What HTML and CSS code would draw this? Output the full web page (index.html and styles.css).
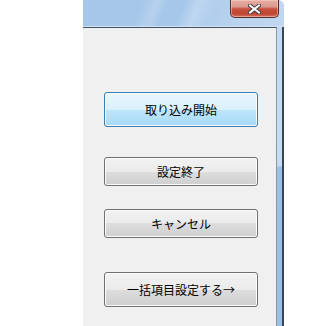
FILE: index.html
```html
<!DOCTYPE html>
<html lang="ja">
<head>
<meta charset="utf-8">
<link rel="stylesheet" href="styles.css">
</head>
<body>
<div class="screen">
  <div class="outside"></div>
  <div class="window">
    <div class="titlebar">
      <div class="close-btn">
        <svg width="13" height="10" viewBox="0 0 13 10" aria-hidden="true">
          <path d="M2 1.5 L11 8.5 M11 1.5 L2 8.5" stroke="#3b3b3b" stroke-width="4" stroke-linecap="square" fill="none"/>
          <path d="M2 1.5 L11 8.5 M11 1.5 L2 8.5" stroke="#ffffff" stroke-width="2" stroke-linecap="square" fill="none"/>
        </svg>
      </div>
    </div>
    <div class="frame-body">
      <div class="client">
        <div class="buttons">
          <button class="btn btn-hover btn-tall">取り込み開始</button>
          <button class="btn btn-short gap-a">設定終了</button>
          <button class="btn btn-short gap-b">キャンセル</button>
          <button class="btn btn-tall gap-c">一括項目設定する→</button>
        </div>
      </div>
      <div class="side-frame"></div>
    </div>
  </div>
</div>
</body>
</html>
```

FILE: styles.css
```css
html, body {
  margin: 0;
  padding: 0;
  background: #ffffff;
}

.screen {
  display: flex;
  width: 284px;
  height: 326px;
  overflow: hidden;
}

.outside {
  width: 83px;
  flex: none;
  background: #ffffff;
}

.window {
  flex: 1;
  display: flex;
  flex-direction: column;
}

.titlebar {
  height: 27px;
  flex: none;
  display: flex;
  justify-content: flex-end;
  align-items: flex-start;
  padding-right: 5px;
  border-top-right-radius: 6px;
  border-bottom: 1px solid #d3e4f5;
  background:
    linear-gradient(112deg,
      rgba(255,255,255,0) 0px,
      rgba(255,255,255,0) 55px,
      rgba(255,255,255,0.18) 70px,
      rgba(255,255,255,0) 80px,
      rgba(255,255,255,0) 95px,
      rgba(255,255,255,0.28) 108px,
      rgba(255,255,255,0.12) 125px,
      rgba(255,255,255,0.22) 150px,
      rgba(255,255,255,0.3) 201px),
    #a6c7ea;
  box-sizing: border-box;
}

.close-btn {
  width: 47px;
  height: 17px;
  display: flex;
  align-items: center;
  justify-content: center;
  border: 1px solid #5b2d2a;
  border-top: none;
  border-radius: 0 0 5px 5px;
  background: linear-gradient(#e6aca2 0%, #dc9a8e 40%, #c9503f 52%, #c04533 80%, #d0745f 100%);
  box-shadow: inset 0 0 0 1px rgba(255,220,210,0.45);
}

.close-btn svg {
  display: block;
  margin-top: 1px;
}

.frame-body {
  flex: 1;
  display: flex;
}

.client {
  flex: 1;
  background: #f0f0f0;
  border-top: 1px solid #3e5165;
  border-right: 1px solid #8a98a6;
}

.buttons {
  display: flex;
  flex-direction: column;
  align-items: flex-start;
  padding: 64px 0 0 21px;
}

.side-frame {
  width: 5px;
  flex: none;
  border-right: 2px solid #3a4654;
  background: linear-gradient(#c2d9f1 0px, #c6dcf2 139px, #9cc1e8 140px, #9ac0e8 100%);
}

.btn {
  width: 154px;
  margin: 0;
  padding: 0;
  box-sizing: border-box;
  font-family: "Noto Sans CJK JP", "Noto Sans", sans-serif;
  font-size: 12px;
  line-height: 1;
  color: #000000;
  border: 1px solid #707070;
  border-radius: 3px;
  box-shadow: inset 0 0 0 1px #fbfbfb;
  background: linear-gradient(#f2f2f2 0%, #ebebeb 50%, #dddddd 50%, #cfcfcf 100%);
  text-align: center;
}

.btn-tall {
  height: 35px;
}

.btn-short {
  height: 29px;
}

.btn-hover {
  border-color: #3c7fb1;
  box-shadow: inset 0 0 0 1px #f4fbfe;
  background: linear-gradient(#eaf6fd 0%, #d9f0fc 50%, #bee6fd 50%, #a7d9f5 100%);
}

.gap-a {
  margin-top: 30px;
}

.gap-b {
  margin-top: 23px;
}

.gap-c {
  margin-top: 34px;
}
```
